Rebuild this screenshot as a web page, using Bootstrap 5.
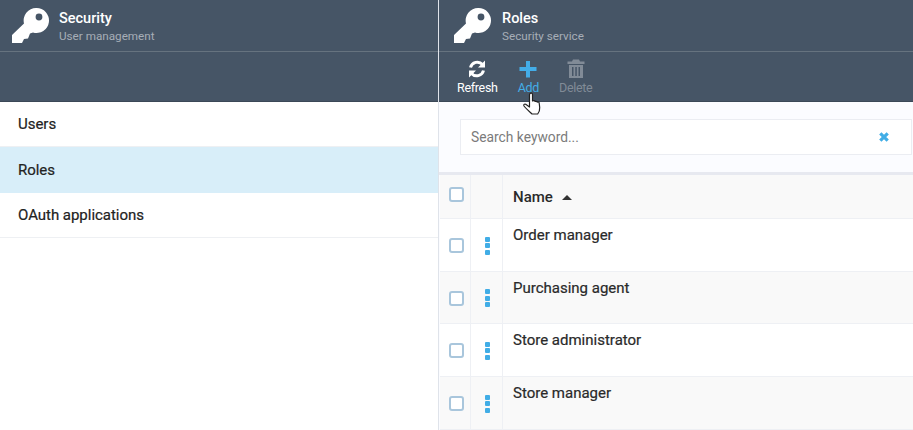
<!DOCTYPE html>
<html lang="en"><head><meta charset="utf-8"><title>Roles</title>
<link href="https://cdn.jsdelivr.net/npm/bootstrap@5.3.0/dist/css/bootstrap.min.css" rel="stylesheet">
<style>
html,body{height:430px;overflow:hidden}
body{font-family:Roboto,"Liberation Sans",sans-serif;background:#fff;color:#2b2b2b}
.blade-wrap{height:430px}
.blade-left{width:439px;flex:none;border-right:1px solid #dfe3ea}
.blade-right{width:474px;background:#fbfcff}
.blade-head{background:#465566;height:101.500px;flex:none;border-bottom:1px solid #3b4857}
.head-top{height:52px;border-bottom:1px solid #66737f;padding-left:12px}
.right-top{padding-left:15px}
.head-icon{width:38px;height:38px;margin-right:9px;margin-top:8px;flex:none}
.right-top .head-icon{margin-right:10px}
.head-title{font-size:14.5px;line-height:17px;color:#fff;font-weight:500;margin-top:10px}
.head-sub{font-size:11.7px;line-height:17px;color:#a6aeb7;margin-top:1px}
.tool-row{height:48px;padding-left:18px;gap:20px}
.tool-item{text-align:center;font-size:12.5px;line-height:14px;color:#fff;letter-spacing:-.3px;padding-top:7px}
.tool-item svg{display:block;margin:0 auto 2px;width:20px;height:20px}
.tool-add{color:#43ade8}
.tool-off{color:#818b97}
.side-item{height:45.5px;flex:none;padding-left:18px;padding-top:1.500px;font-size:15px;font-weight:400;letter-spacing:-.03px;border-bottom:1px solid #eef0f3;color:#222;-webkit-text-stroke:.2px #222}
.side-on{background:#d8eef9;border-bottom-color:#d8eef9}
.search-zone{height:73.500px;flex:none;padding:17.500px 1px 0 21px;border-bottom:3px solid #e7e9f0}
.search-box{height:36px;background:#fff;border:1px solid #ebedf2;padding:0 22px 0 10px;font-size:13.8px;color:#7b7b7b}
.grid-row{height:52.7px;flex:none;margin-left:1px;border-bottom:1px solid #eef0f4}
.grid-head{height:44px;background:#f9f9f9}
.grid-odd{background:#fff}
.grid-even{background:#f9f9f9}
.cell-check{width:31px;padding-left:2px;padding-top:1.500px;border-right:1px solid #eef0f4}
.grid-head .cell-check{padding-top:0;padding-bottom:5px}
.cell-menu{width:32px;padding-top:1.500px;padding-left:1px;border-right:1px solid #eef0f4}
.box-check{width:15px;height:15px;border:2px solid #a9c6dc;border-radius:3px;background:#fff}
.dots-v{width:5px;display:flex;flex-direction:column;gap:1.5px}
.dots-v i{display:block;width:5px;height:5px;background:#41ade6;border-radius:1px}
.cell-name{padding-left:10px;padding-top:7px;font-size:15px;font-weight:400;color:#2a2a2a;-webkit-text-stroke:.2px #2a2a2a;line-height:18px}
.grid-head .cell-name{padding-top:1px;align-self:center;font-weight:500;-webkit-text-stroke:0}
.sort-up{display:inline-block;width:0;height:0;border-left:5px solid transparent;border-right:5px solid transparent;border-bottom:5px solid #333;margin-left:9px;vertical-align:2px}
.hand-cursor{position:absolute;left:521px;top:92px;width:22px;height:24px}
</style></head><body>
<svg width="0" height="0" class="d-block" aria-hidden="true"><defs>
<symbol id="keyico" viewBox="0 0 38 38"><path fill="#fff" fill-rule="evenodd" d="M24.300 0A12.500 12.500 0 1 1 21 24.500L18 25.500 16 30.500 12 31 10 35H0V27L12 15.500A12.500 12.500 0 0 1 24.300 0ZM27 5.600a3.400 3.400 0 1 0 0 6.800 3.400 3.400 0 0 0 0-6.800Z"/></symbol>
</defs></svg>
<div class="d-flex blade-wrap">
 <div class="blade-left d-flex flex-column">
  <div class="blade-head">
   <div class="head-top d-flex"><svg class="head-icon"><use href="#keyico"/></svg><div><div class="head-title">Security</div><div class="head-sub">User management</div></div></div>
  </div>
  <div class="side-item d-flex align-items-center">Users</div>
  <div class="side-item side-on d-flex align-items-center">Roles</div>
  <div class="side-item d-flex align-items-center">OAuth applications</div>
 </div>
 <div class="blade-right d-flex flex-column">
  <div class="blade-head">
   <div class="head-top right-top d-flex"><svg class="head-icon"><use href="#keyico"/></svg><div><div class="head-title">Roles</div><div class="head-sub">Security service</div></div></div>
   <div class="tool-row d-flex">
    <div class="tool-item"><svg viewBox="0 0 20 20"><path fill="none" stroke="#fff" stroke-width="3" d="M3.500 8.500A7 7 0 0 1 15.500 5.500M16.500 11.500A7 7 0 0 1 4.500 14.500"/><path fill="#fff" d="M18 1.500V8.500H11ZM2 18.500V11.500H9Z"/></svg>Refresh</div>
    <div class="tool-item tool-add"><svg viewBox="0 0 20 20"><path fill="#43ade8" d="M8 2h4v6h6.500v4H12v6.500H8V12H1.500V8H8Z"/></svg>Add</div>
    <div class="tool-item tool-off"><svg viewBox="0 0 20 20"><path fill="#818b97" fill-rule="evenodd" d="M7 0.500h6l1 2h4.500v2.500h-17V2.500H6ZM3 6h14v13H3ZM6 8v9h1.500V8ZM9.300 8v9h1.500V8ZM12.500 8v9H14V8Z"/></svg>Delete</div>
   </div>
  </div>
  <div class="search-zone"><div class="search-box d-flex align-items-center justify-content-between"><span>Search keyword...</span><svg width="10" height="10" viewBox="0 0 10 10"><path stroke="#41ade6" stroke-width="3.200" d="M1.300 1.300l7.400 7.400M8.700 1.300L1.300 8.700"/></svg></div></div>
  <div class="grid-row grid-head d-flex"><div class="cell-check d-flex align-items-center justify-content-center"><span class="box-check"></span></div><div class="cell-menu"></div><div class="cell-name">Name<span class="sort-up"></span></div></div>
  <div class="grid-row grid-odd d-flex"><div class="cell-check d-flex align-items-center justify-content-center"><span class="box-check"></span></div><div class="cell-menu d-flex align-items-center justify-content-center"><span class="dots-v"><i></i><i></i><i></i></span></div><div class="cell-name">Order manager</div></div>
  <div class="grid-row grid-even d-flex"><div class="cell-check d-flex align-items-center justify-content-center"><span class="box-check"></span></div><div class="cell-menu d-flex align-items-center justify-content-center"><span class="dots-v"><i></i><i></i><i></i></span></div><div class="cell-name">Purchasing agent</div></div>
  <div class="grid-row grid-odd d-flex"><div class="cell-check d-flex align-items-center justify-content-center"><span class="box-check"></span></div><div class="cell-menu d-flex align-items-center justify-content-center"><span class="dots-v"><i></i><i></i><i></i></span></div><div class="cell-name">Store administrator</div></div>
  <div class="grid-row grid-even d-flex"><div class="cell-check d-flex align-items-center justify-content-center"><span class="box-check"></span></div><div class="cell-menu d-flex align-items-center justify-content-center"><span class="dots-v"><i></i><i></i><i></i></span></div><div class="cell-name">Store manager</div></div>
 </div>
</div>
<svg class="hand-cursor" viewBox="0 0 22 24"><path fill="#fff" stroke="#222" stroke-width="1.200" stroke-linejoin="round" d="M9 1.500c.8-.8 2.500-.5 2.500 1.200V9l1-.3c.8-.2 1.500.2 1.700.8.8-.4 1.700-.2 2 .6.800-.4 1.800 0 2 .9l.5 4.500c.2 2.500-.8 5-2 6.500H11c-1-1-6.500-6-8-8-.8-1.200.5-2.500 1.700-1.700L8.500 15V3c0-.5.2-1 .5-1.500z"/></svg>
</body></html>
